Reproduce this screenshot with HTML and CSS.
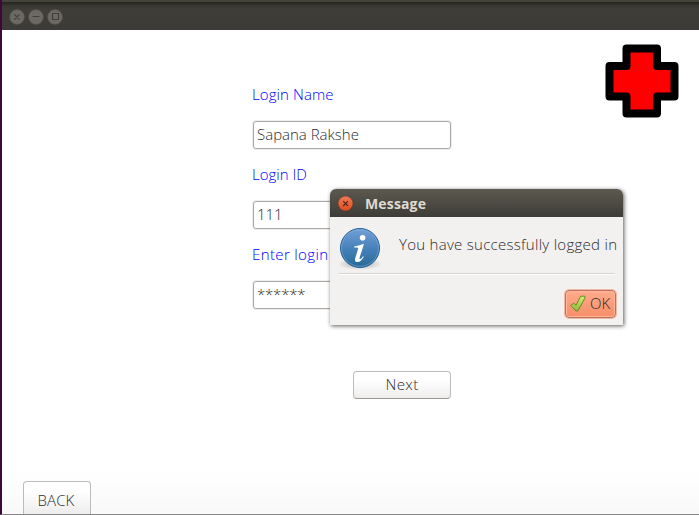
FILE: index.html
```
<!DOCTYPE html>
<html lang="en">
<head>
<meta charset="utf-8">
<title>Login</title>
<link rel="stylesheet" href="styles.css">
</head>
<body>
<div class="window">
  <header class="titlebar">
    <svg class="controls" width="54" height="16" viewBox="0 0 54 16">
      <g fill="#6b6962" stroke="#55534c" stroke-width=".6"><circle cx="8" cy="8" r="7.4"/><circle cx="27" cy="8" r="7.4"/><circle cx="46" cy="8" r="7.4"/></g>
      <g fill="none" stroke="#403f3a" stroke-width="1.2"><path d="M5.5 5.5l5 5m0-5l-5 5M23.5 7.5h7M43.5 4.5h6v6h-6z"/></g>
    </svg>
  </header>
  <main class="content">
    <form class="form">
      <label class="label name">Login Name</label>
      <div class="field"><span class="t-user">Sapana Rakshe</span></div>
      <label class="label id">Login ID</label>
      <div class="field"><span>111</span></div>
      <label class="label pass">Enter login</label>
      <div class="field"><span class="t-stars">******</span></div>
      <button class="button next" type="button"><span>Next</span></button>
    </form>
    <svg class="cross" width="74" height="74" viewBox="0 0 74 74">
      <path d="M21.5 4.5H52V22H69.5V52.5H52V69.5H21.5V52.5H4.5V22H21.5Z" fill="#f00" stroke="#000" stroke-width="8" stroke-linejoin="round"/>
    </svg>
  </main>
  <footer class="footer"><button class="button back" type="button"><span>BACK</span></button></footer>
</div>
<section class="dialog" role="dialog">
  <header class="dialog-title">
    <svg width="16" height="16" viewBox="0 0 16 16">
      <defs><linearGradient id="close" x2="0" y2="1"><stop stop-color="#f37b55"/><stop offset="1" stop-color="#dd4b1d"/></linearGradient></defs>
      <circle cx="7.5" cy="7.5" r="7.5" fill="url(#close)" stroke="#45352a" stroke-width=".5"/>
      <path d="M5.2 5.2l4.8 4.8m0-4.8l-4.8 4.8" stroke="#45291d" stroke-width="1.1"/>
    </svg>
    <span>Message</span>
  </header>
  <div class="dialog-body">
    <div class="message">
      <svg class="info" width="44" height="44" viewBox="0 0 44 44">
        <defs>
          <linearGradient id="blue" x2="0" y2="1"><stop stop-color="#74a0d8"/><stop offset=".55" stop-color="#437fb7"/><stop offset="1" stop-color="#286995"/></linearGradient>
          <radialGradient id="shade"><stop stop-color="#777" stop-opacity=".6"/><stop offset="1" stop-color="#777" stop-opacity="0"/></radialGradient>
        </defs>
        <ellipse cx="22" cy="37" rx="22" ry="6" fill="url(#shade)"/>
        <circle cx="22" cy="21" r="19.5" fill="url(#blue)" stroke="#23639a"/>
        <circle cx="22" cy="21" r="18.4" fill="none" stroke="#8bb4dc" stroke-opacity=".6" stroke-width=".8"/>
        <circle cx="24.6" cy="10.7" r="2.8" fill="#fff"/>
        <path d="M16.3 19.4Q21.5 18.7 26 16.8L21.8 30.1Q21.1 32.7 22.4 32.1Q23.4 31.5 25 29.2L25.8 29.8Q22.8 35.1 19.5 35.1Q16 35 17.3 31L20 22.3Q20.7 20.3 18.7 20.4L16 20.6Z" fill="#fff"/>
      </svg>
      <span class="message-text">You have successfully logged in</span>
    </div>
    <div class="actions">
      <button class="ok" type="button">
        <svg width="16" height="17" viewBox="0 0 16 17">
          <defs><linearGradient id="green" x2="0" y2="1"><stop stop-color="#d5ed72"/><stop offset="1" stop-color="#8fb939"/></linearGradient></defs>
          <path d="M.8 10.4L3.6 8.3L6.1 10.2L10.6 1.2L14.8 1.2L14.8 3.3L8 15.7L6 16Z" fill="url(#green)" stroke="#5b8528" stroke-width=".9" stroke-linejoin="round"/>
        </svg>
        <span>OK</span>
      </button>
    </div>
  </div>
</section>
</body>
</html>
```
FILE: styles.css
```
* { box-sizing: border-box; }
body {
  margin: 0;
  width: 699px;
  height: 515px;
  overflow: hidden;
  position: relative;
  color: #2c2c2c;
  font: 300 15px/20px "Open Sans", "Noto Sans", sans-serif;
}
span, label { white-space: nowrap; }
.window {
  display: flex;
  flex-direction: column;
  height: 515px;
  border-left: 2px solid #3d073c;
  border-bottom: 1px solid #858585;
  background: linear-gradient(#fff 470px, #f9f9f9);
}
.titlebar {
  flex: none;
  height: 30px;
  padding: 9px 0 0 7px;
  background: linear-gradient(#45443b 0 2px, #24231f 2px, #393832 6px, #3e3d38 10px, #3c3b37);
}
.controls, .cross, .ok svg, .dialog-title svg { display: block; flex: none; }
.content { display: flex; flex: 1; align-items: flex-start; }
.form {
  display: flex;
  flex-direction: column;
  width: 200px;
  margin: 54px 0 0 250px;
}
.label {
  height: 20px;
  margin: 0 0 17px;
  color: #00f;
}
.name { letter-spacing: .1px; }
.pass { letter-spacing: .37px; }
.field {
  width: 198px;
  height: 28px;
  margin: 0 0 15px 1px;
  padding: 2px 3px 0;
  border: 1px solid #aaa8a4;
  border-radius: 3px;
  box-shadow: 0 0 0 1px #f0efed;
}
.t-stars { letter-spacing: -.2px; }
.cross { margin: 14px 0 0 153px; }
.button {
  padding: 0 0 2px;
  border: 1px solid #bcbcbc;
  border-bottom-color: #999;
  border-radius: 4px;
  background: linear-gradient(#fff 30%, #eeedec);
  color: inherit;
  font: inherit;
}
.next {
  align-self: flex-end;
  width: 98px;
  height: 28px;
  margin: 47px 1px 0 0;
  letter-spacing: .4px;
}
.footer { height: 33px; padding-left: 21px; }
.back {
  width: 68px;
  height: 33px;
  padding: 3px 2px 0 0;
  letter-spacing: .1px;
  border-bottom: 0;
  border-radius: 4px 4px 0 0;
}
.dialog {
  position: absolute;
  left: 330px;
  top: 189px;
  width: 293px;
  height: 136px;
  border-radius: 6px 6px 0 0;
  background: #f2f1f0;
  box-shadow: 1px 1px 4px rgba(0, 0, 0, .65);
}
.dialog-title {
  display: flex;
  align-items: center;
  gap: 11px;
  height: 28px;
  padding: 1px 0 0 8px;
  border-radius: 6px 6px 0 0;
  background: linear-gradient(#5c594f, #3d3c37);
  color: #dfdbd2;
  font-weight: 700;
  font-size: 14px;
  letter-spacing: .15px;
}
.dialog-body { padding: 10px 8px 0; }
.message {
  display: flex;
  height: 47px;
  border-bottom: 1px solid #d6d4d2;
  box-shadow: 0 1px #fff;
}
.info { flex: none; }
.message-text { margin: 7px 0 0 17px; letter-spacing: .28px; }
.actions { display: flex; justify-content: flex-end; padding-top: 16px; }
.ok {
  display: flex;
  align-items: center;
  gap: 4px;
  width: 51px;
  height: 28px;
  margin-right: -1px;
  padding: 0 0 2px 4px;
  border: 1px solid #bb7258;
  border-radius: 4px;
  background: linear-gradient(#ffab8c, #f68e67);
  box-shadow: 0 0 0 1px #efbba8, inset 0 0 0 1px #ffb69c;
  color: inherit;
  font: inherit;
}
```
